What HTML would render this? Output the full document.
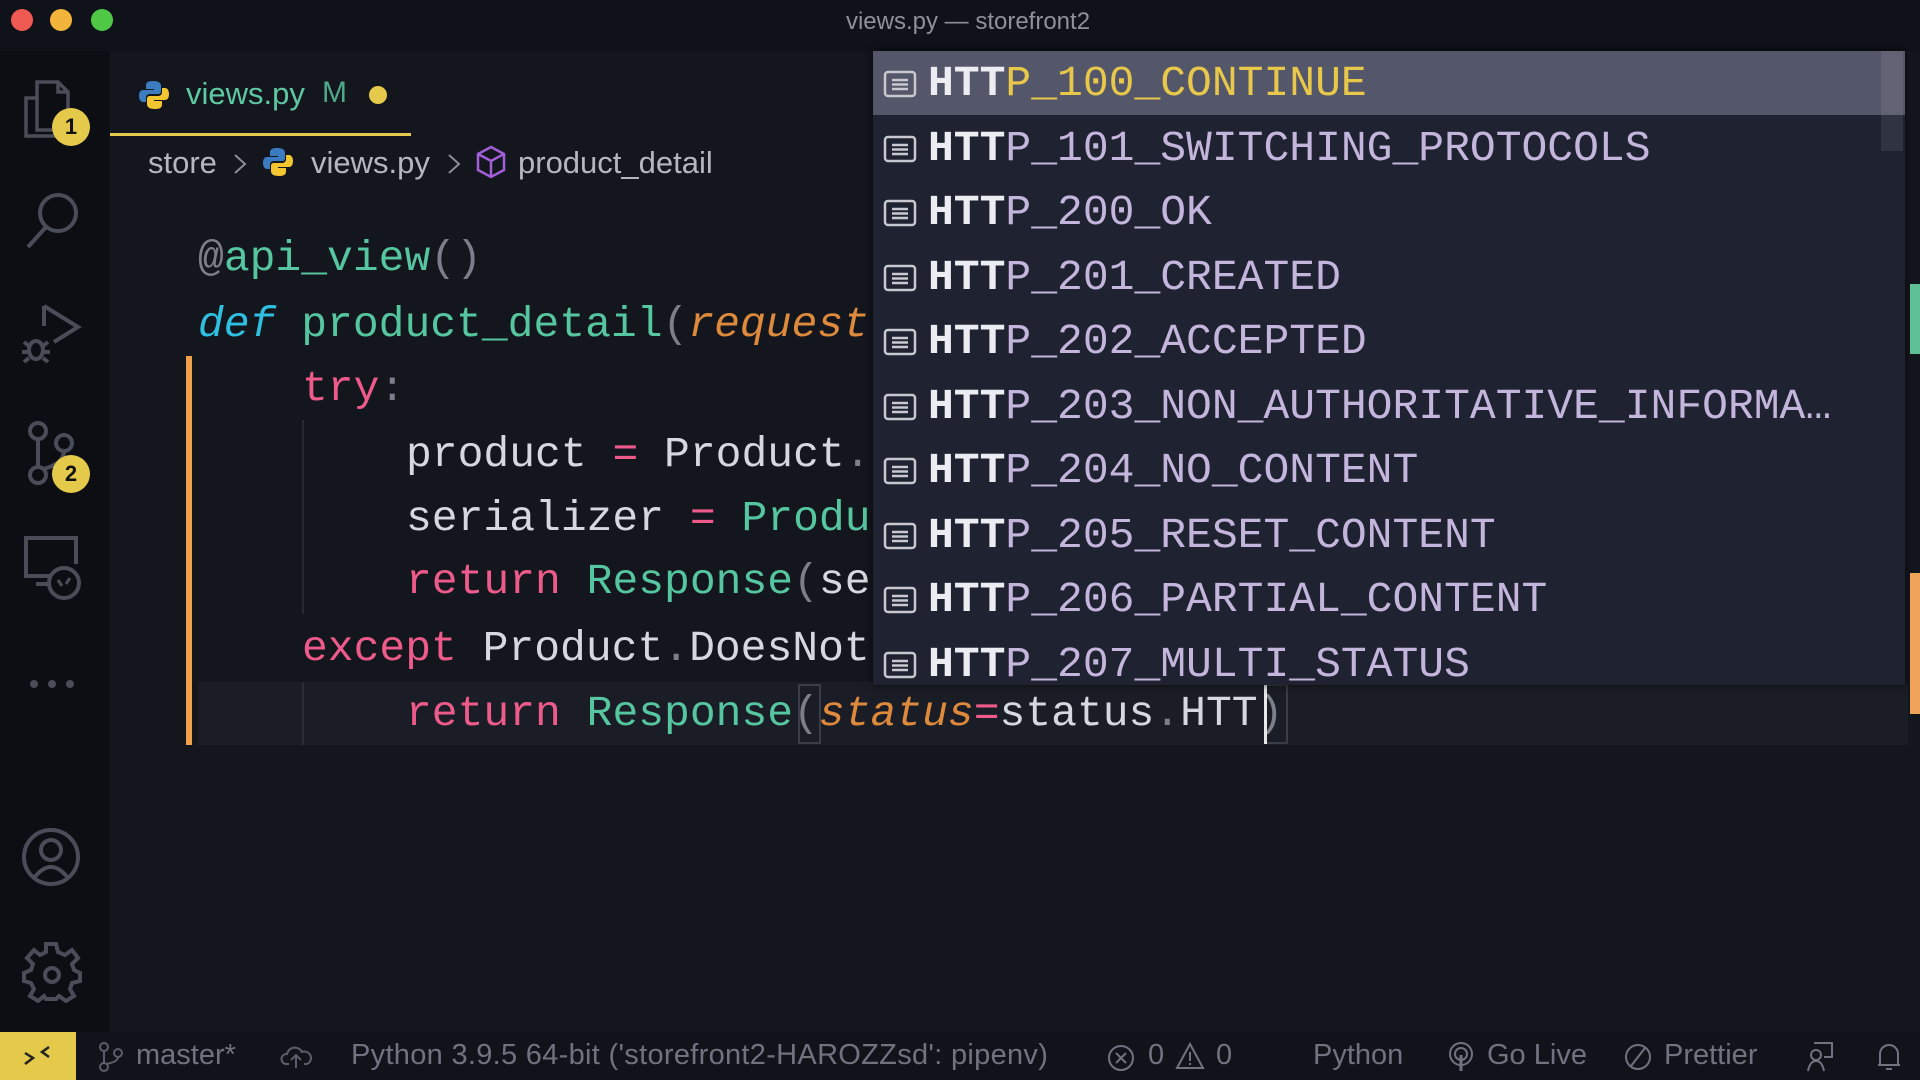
<!DOCTYPE html>
<html><head><meta charset="utf-8"><style>
*{margin:0;padding:0;box-sizing:border-box}
body{width:1920px;height:1080px;overflow:hidden;background:#14161d;font-family:"Liberation Sans",sans-serif;position:relative}
.abs{position:absolute}
#title{left:0;top:0;width:1920px;height:51px;background:#10121a}
#act{left:0;top:51px;width:110px;height:981px;background:#0c0e14}
.code{position:absolute;font-family:"Liberation Mono",monospace;font-size:43px;line-height:64px;white-space:pre;color:#d6d8df}
.t{color:#55c69f}.g{color:#7c7f89}.k{color:#ee5b8a}.o{color:#de8a3c;font-style:italic}.c{color:#2fbfe0;font-style:italic}
#wid{left:873px;top:51px;width:1032px;height:634px;background:#1f2230;overflow:hidden;box-shadow:0 0 8px #000a}
.row{position:absolute;left:0;width:1032px;height:64.5px;font-family:"Liberation Mono",monospace;font-size:43px;line-height:64px;white-space:pre;color:#c4b5dc}
.row b{color:#ecedf2}
.row svg{position:absolute;left:10px;top:18px}
.row span.tx{position:absolute;left:55px;top:0}
#status{left:0;top:1032px;width:1920px;height:48px;background:#11131a;color:#6f7380;font-size:29px}
#status span{position:absolute;top:7px;white-space:nowrap}
.ic{stroke:#4a4d57;fill:none;stroke-width:4}
.bc{color:#b4b7c1;font-size:31px;top:145px}
</style></head><body>
<div id="title" class="abs">
 <div class="abs" style="left:11px;top:9px;width:22px;height:22px;border-radius:50%;background:#ee5a52"></div>
 <div class="abs" style="left:50px;top:9px;width:22px;height:22px;border-radius:50%;background:#f2b43a"></div>
 <div class="abs" style="left:91px;top:9px;width:22px;height:22px;border-radius:50%;background:#4ec845"></div>
 <div class="abs" style="left:0;width:1936px;top:8px;text-align:center;color:#8e909a;font-size:24px">views.py — storefront2</div>
</div>
<div id="act" class="abs">
 <svg class="abs" style="left:22px;top:27px" width="60" height="65" viewBox="0 0 60 65"><path class="ic" d="M15 20 H4 V58 H34 V52 M15 4 H36 L46 14 V52 H15 Z M36 4 V14 H46" style="stroke-width:3.5"/></svg>
 <div class="abs" style="left:52px;top:57px;width:38px;height:38px;border-radius:50%;background:#e4c94a;color:#111;font-weight:bold;font-size:22px;text-align:center;line-height:38px">1</div>
 <svg class="abs" style="left:22px;top:138px" width="60" height="70"><circle cx="36" cy="24" r="18" class="ic"/><path class="ic" d="M24 38 L6 58"/></svg>
 <svg class="abs" style="left:18px;top:251px" width="70" height="70"><path class="ic" d="M26 4 L60 25 L36 40 M26 4 V24"/><ellipse cx="18" cy="48" rx="7" ry="9" class="ic"/><path class="ic" d="M6 40 L11 44 M30 40 L25 44 M4 50 H10 M26 50 H32 M6 60 L11 56 M30 60 L25 56"/></svg>
 <svg class="abs" style="left:22px;top:368px" width="60" height="70"><circle cx="16" cy="12" r="8" class="ic"/><circle cx="42" cy="24" r="8" class="ic"/><circle cx="16" cy="56" r="8" class="ic"/><path class="ic" d="M16 20 V48 M42 32 Q42 44 22 50"/></svg>
 <div class="abs" style="left:52px;top:404px;width:38px;height:38px;border-radius:50%;background:#e4c94a;color:#111;font-weight:bold;font-size:22px;text-align:center;line-height:38px">2</div>
 <svg class="abs" style="left:22px;top:483px" width="60" height="70"><path class="ic" d="M38 42 H4 V4 H54 V30 M14 50 H28"/><circle cx="42" cy="49" r="15" class="ic" style="fill:#0c0e14"/><path class="ic" d="M36 46 L40 52 M48 44 L44 50" style="stroke-width:3"/></svg>
 <div class="abs" style="left:30px;top:629px;width:8px;height:8px;border-radius:50%;background:#4a4d57;box-shadow:18px 0 #4a4d57,36px 0 #4a4d57"></div>
 <svg class="abs" style="left:22px;top:777px" width="60" height="60"><circle cx="29" cy="29" r="27" class="ic"/><circle cx="29" cy="22" r="10" class="ic"/><path class="ic" d="M12 50 Q29 28 46 50"/></svg>
 <svg class="abs" style="left:22px;top:890px" width="60" height="62" viewBox="0 0 60 62"><path class="ic" d="M24 3 H34 L36 11 L43 14 L50 9 L56 17 L50 23 L52 29 L58 32 V40 L50 42 L48 48 L52 55 L44 60 L37 55 L34 58 H24 L22 55 L16 60 L8 55 L12 48 L9 42 L2 40 V32 L9 29 L11 23 L5 17 L12 9 L18 14 L24 11 Z"/><circle cx="30" cy="34" r="7" class="ic"/></svg>
</div>
<div class="abs" style="left:110px;top:51px;width:1810px;height:981px;background:#14161d"></div>
<!-- tab -->
<svg class="abs" style="left:138px;top:79px" width="32" height="32" viewBox="0 0 32 32"><path d="M15 2 C8 2 8 5 8 7 V10 H16 V11 H5 C2 11 1 14 1 17 C1 21 3 23 5 23 H8 V19 C8 16 10 15 12 15 H20 C22 15 23 14 23 12 V7 C23 4 21 2 15 2Z" fill="#3b7bbf"/><path d="M17 30 C24 30 24 27 24 25 V22 H16 V21 H27 C30 21 31 18 31 15 C31 11 29 9 27 9 H24 V13 C24 16 22 17 20 17 H12 C10 17 9 18 9 20 V25 C9 28 11 30 17 30Z" fill="#f2c531"/></svg>
<div class="abs" style="left:186px;top:76px;color:#5ec8a2;font-size:31px">views.py</div>
<div class="abs" style="left:322px;top:76px;color:#4ea889;font-size:30px">M</div>
<div class="abs" style="left:369px;top:86px;width:18px;height:18px;border-radius:50%;background:#e4c94a"></div>
<div class="abs" style="left:110px;top:133px;width:301px;height:3px;background:#e4c94a"></div>
<!-- breadcrumb -->
<div class="abs bc" style="left:148px">store</div>
<svg class="abs" style="left:232px;top:152px" width="16" height="24"><path d="M3 3 L13 12 L3 21" fill="none" stroke="#8a8d97" stroke-width="2"/></svg>
<svg class="abs" style="left:262px;top:146px" width="32" height="32" viewBox="0 0 32 32"><path d="M15 2 C8 2 8 5 8 7 V10 H16 V11 H5 C2 11 1 14 1 17 C1 21 3 23 5 23 H8 V19 C8 16 10 15 12 15 H20 C22 15 23 14 23 12 V7 C23 4 21 2 15 2Z" fill="#3b7bbf"/><path d="M17 30 C24 30 24 27 24 25 V22 H16 V21 H27 C30 21 31 18 31 15 C31 11 29 9 27 9 H24 V13 C24 16 22 17 20 17 H12 C10 17 9 18 9 20 V25 C9 28 11 30 17 30Z" fill="#f2c531"/></svg>
<div class="abs bc" style="left:311px">views.py</div>
<svg class="abs" style="left:446px;top:152px" width="16" height="24"><path d="M3 3 L13 12 L3 21" fill="none" stroke="#8a8d97" stroke-width="2"/></svg>
<svg class="abs" style="left:476px;top:145px" width="30" height="34" viewBox="0 0 30 34"><path d="M15 2 L28 9 V25 L15 32 L2 25 V9 Z M2 9 L15 16 L28 9 M15 16 V32" fill="none" stroke="#a35fd8" stroke-width="2.5"/></svg>
<div class="abs bc" style="left:518px">product_detail</div>
<!-- current line & gutter -->
<div class="abs" style="left:198px;top:682px;width:1710px;height:63px;background:#1b1d26"></div>
<div class="abs" style="left:186px;top:356px;width:6px;height:389px;background:#f0a04a"></div>
<div class="abs" style="left:302px;top:420px;width:2px;height:194px;background:#262833"></div>
<div class="abs" style="left:302px;top:682px;width:2px;height:63px;background:#2a2c37"></div>
<!-- code -->
<div class="code" style="left:198px;top:227px"><span class="g">@</span><span class="t">api_view</span><span class="g">()</span></div>
<div class="code" style="left:198px;top:293px"><span class="c">def</span> <span class="t">product_detail</span><span class="g">(</span><span class="o">request</span></div>
<div class="code" style="left:302px;top:357px"><span class="k">try</span><span class="g">:</span></div>
<div class="code" style="left:406px;top:423px">product <span class="k">=</span> Product<span class="g">.</span></div>
<div class="code" style="left:406px;top:487px">serializer <span class="k">=</span> <span class="t">Produ</span></div>
<div class="code" style="left:406px;top:550px"><span class="k">return</span> <span class="t">Response</span><span class="g">(</span>se</div>
<div class="code" style="left:302px;top:617px"><span class="k">except</span> Product<span class="g">.</span>DoesNot</div>
<div class="code" style="left:406px;top:682px"><span class="k">return</span> <span class="t">Response</span><span class="g">(</span><span class="o">status</span><span class="k">=</span>status<span class="g">.</span>HTT<span class="g">)</span></div>
<div class="abs" style="left:798px;top:684px;width:23px;height:60px;border:2px solid #3a3d48"></div>
<div class="abs" style="left:1264px;top:684px;width:24px;height:60px;border:2px solid #3a3d48"></div>
<div class="abs" style="left:1264px;top:684px;width:3px;height:60px;background:#e8e8ea"></div>
<!-- widget -->
<div id="wid" class="abs">
 <div class="abs" style="left:0;top:0;width:1032px;height:64px;background:#545669"></div>
 <div class="abs" style="left:1008px;top:0;width:22px;height:100px;background:#ffffff14"></div>
</div>
<div id="rows" class="abs" style="left:873px;top:52px;width:1032px;height:633px;overflow:hidden"></div>
<!-- right markers -->
<div class="abs" style="left:1910px;top:284px;width:10px;height:70px;background:#5fbf96"></div>
<div class="abs" style="left:1910px;top:573px;width:10px;height:141px;background:#f0a45a"></div>
<!-- status -->
<div id="status" class="abs">
 <div class="abs" style="left:0;top:0;width:76px;height:48px;background:#e4c94a"></div>
 <svg class="abs" style="left:22px;top:12px" width="30" height="24"><path d="M3 9 L11 14 L3 20 M27 3 L20 8 L27 13" stroke="#222" stroke-width="2.5" fill="none"/></svg>
 <svg class="abs" style="left:96px;top:10px" width="28" height="30"><circle cx="8" cy="5" r="4" fill="none" stroke="#5a5e6a" stroke-width="2"/><circle cx="8" cy="25" r="4" fill="none" stroke="#5a5e6a" stroke-width="2"/><circle cx="22" cy="11" r="4" fill="none" stroke="#5a5e6a" stroke-width="2"/><path d="M8 9 V21 M22 15 Q22 20 10 22" fill="none" stroke="#5a5e6a" stroke-width="2"/></svg>
 <span style="left:136px">master*</span>
 <svg class="abs" style="left:280px;top:12px" width="34" height="26"><path d="M9 20 H6 A5 5 0 0 1 7 10 A8 8 0 0 1 22 8 A6 6 0 0 1 27 20 H24 M16 24 V12 M11 16 L16 11 L21 16" fill="none" stroke="#5a5e6a" stroke-width="2"/></svg>
 <span style="left:351px;letter-spacing:0.3px">Python 3.9.5 64-bit ('storefront2-HAROZZsd': pipenv)</span>
 <svg class="abs" style="left:1107px;top:12px" width="28" height="28"><circle cx="14" cy="14" r="12" fill="none" stroke="#6f7380" stroke-width="2"/><path d="M9 9 L19 19 M19 9 L9 19" stroke="#6f7380" stroke-width="2"/></svg>
 <span style="left:1148px">0</span>
 <svg class="abs" style="left:1175px;top:10px" width="30" height="28"><path d="M15 2 L28 26 H2 Z M15 10 V19 M15 21 V23" fill="none" stroke="#6f7380" stroke-width="2"/></svg>
 <span style="left:1216px">0</span>
 <span style="left:1313px">Python</span>
 <svg class="abs" style="left:1447px;top:9px" width="28" height="32"><circle cx="14" cy="13" r="11" fill="none" stroke="#6f7380" stroke-width="2"/><circle cx="14" cy="13" r="6" fill="none" stroke="#6f7380" stroke-width="2"/><path d="M14 14 V30" stroke="#6f7380" stroke-width="3"/></svg>
 <span style="left:1487px">Go Live</span>
 <svg class="abs" style="left:1624px;top:11px" width="28" height="28"><circle cx="14" cy="14" r="12" fill="none" stroke="#6f7380" stroke-width="2"/><path d="M21 5 L7 23" stroke="#6f7380" stroke-width="2"/></svg>
 <span style="left:1664px">Prettier</span>
 <svg class="abs" style="left:1804px;top:9px" width="30" height="32"><path d="M10 2 H28 V16 H20 M4 30 Q6 20 12 20 Q18 20 20 30" fill="none" stroke="#6f7380" stroke-width="2"/><circle cx="12" cy="14" r="5" fill="none" stroke="#6f7380" stroke-width="2"/></svg>
 <svg class="abs" style="left:1876px;top:9px" width="26" height="32"><path d="M4 24 V13 A9 9 0 0 1 22 13 V24 Z M2 24 H24 M10 28 H16" fill="none" stroke="#6f7380" stroke-width="2"/></svg>
</div>
<script>
var names=["100_CONTINUE","101_SWITCHING_PROTOCOLS","200_OK","201_CREATED","202_ACCEPTED","203_NON_AUTHORITATIVE_INFORMA…","204_NO_CONTENT","205_RESET_CONTENT","206_PARTIAL_CONTENT","207_MULTI_STATUS"];
var h="";
names.forEach(function(n,i){
 var col=i==0?"color:#e8c84a":"";
 h+='<div class="row" style="top:'+(i*64.5)+'px;'+col+'"><svg width="34" height="28"><rect x="2" y="2" width="30" height="24" rx="3" fill="none" stroke="#c8c9d0" stroke-width="2.5"/><path d="M9 10 H25 M9 14.5 H25 M9 19 H25" stroke="#c8c9d0" stroke-width="2.5"/></svg><span class="tx"><b>HTT</b>P_'+n+'</span></div>';
});
document.getElementById("rows").innerHTML=h;
</script>
</body></html>
